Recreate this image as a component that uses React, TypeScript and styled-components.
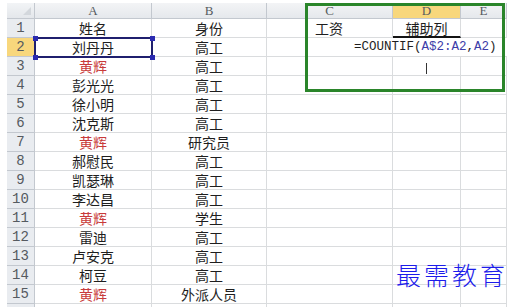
import React from "react";
import styled, { createGlobalStyle } from "styled-components";

const COLORS = {
  GRID: "#dadcde",
  HEAD_BG: "#e9ecf0",
  HEAD_LINE: "#c3c8cf",
  HEAD_TEXT: "#555a60",
  ACTIVE: "#f8d77c",
  TEXT: "#1e1e1e",
  RED: "#c83a3a",
  REF: "#3c3ca8",
  FRAME: "#2a852a",
  SELECT: "#1f1f6e",
  MARK: "#1c1cea",
};

const CJK = `"Noto Sans CJK SC", "Noto Sans", sans-serif`;
const MONO = `"Liberation Mono", "Noto Sans CJK SC", monospace`;

const GlobalStyle = createGlobalStyle`
  body {
    margin: 0;
    background: #ffffff;
    font-family: ${CJK};
  }
`;

const Sheet = styled.div`
  position: relative;
  display: grid;
  grid-template-columns: 28px 117px 115px 126px 68px 46px;
  grid-template-rows: 16px repeat(16, 19px);
  width: 500px;
  height: 304px;
  margin: 3px 0 0 7px;
  overflow: hidden;
`;

const Corner = styled.div`
  position: relative;
  background: linear-gradient(#f2f4f6, #e4e7eb);
  border-right: 1px solid ${COLORS.HEAD_LINE};
  border-bottom: 1px solid ${COLORS.HEAD_LINE};
  &::after {
    content: "";
    position: absolute;
    right: 3px;
    bottom: 3px;
    border-left: 8px solid transparent;
    border-bottom: 8px solid #d3d7dc;
  }
`;

const ColHeader = styled.div<{ $active?: boolean }>`
  display: flex;
  align-items: center;
  justify-content: center;
  background: ${(p) =>
    p.$active ? COLORS.ACTIVE : "linear-gradient(#f3f4f6, #e5e8ec)"};
  border-right: 1px solid ${COLORS.HEAD_LINE};
  border-bottom: 1px solid ${COLORS.HEAD_LINE};
  color: ${COLORS.HEAD_TEXT};
  font-family: "Liberation Serif", serif;
  font-size: 13px;
`;

const RowHeader = styled.div<{ $active?: boolean }>`
  display: flex;
  align-items: center;
  justify-content: center;
  background: ${(p) => (p.$active ? COLORS.ACTIVE : COLORS.HEAD_BG)};
  border-right: 1px solid ${COLORS.HEAD_LINE};
  border-bottom: 1px solid ${COLORS.HEAD_LINE};
  color: ${COLORS.HEAD_TEXT};
  font-family: ${MONO};
  font-size: 14px;
`;

const Cell = styled.div<{
  $align?: "left" | "center";
  $red?: boolean;
  $pad?: number;
  $underline?: boolean;
}>`
  display: flex;
  align-items: center;
  justify-content: ${(p) => (p.$align === "left" ? "flex-start" : "center")};
  padding-left: ${(p) => p.$pad ?? 0}px;
  border-right: 1px solid ${COLORS.GRID};
  border-bottom: ${(p) =>
    p.$underline ? "2px solid #141414" : `1px solid ${COLORS.GRID}`};
  color: ${(p) => (p.$red ? COLORS.RED : COLORS.TEXT)};
  font-size: 14px;
  white-space: nowrap;
`;

const FormulaCell = styled.div`
  grid-column: span 3;
  display: flex;
  align-items: center;
  padding-left: 87px;
  border-bottom: 1px solid ${COLORS.GRID};
  font-family: ${MONO};
  font-size: 12.5px;
  color: ${COLORS.TEXT};
  white-space: nowrap;
`;

const Ref = styled.span`
  color: ${COLORS.REF};
`;

const Caret = styled.span`
  width: 1px;
  height: 11px;
  margin-top: 4px;
  background: #333;
`;

const Selection = styled.div`
  position: absolute;
  left: 27px;
  top: 34px;
  width: 119px;
  height: 21px;
  border: 2px solid ${COLORS.SELECT};
  box-sizing: border-box;
  pointer-events: none;
`;

const Handle = styled.span<{ $x: "l" | "r"; $y: "t" | "b" }>`
  position: absolute;
  width: 5px;
  height: 5px;
  background: #2b2bb0;
  ${(p) => (p.$x === "l" ? "left: -3.5px;" : "right: -3.5px;")}
  ${(p) => (p.$y === "t" ? "top: -3.5px;" : "bottom: -3.5px;")}
`;

const Frame = styled.div`
  position: absolute;
  left: 298px;
  top: 0;
  width: 200px;
  height: 89px;
  border: 3px solid ${COLORS.FRAME};
  box-sizing: border-box;
  pointer-events: none;
`;

const Watermark = styled.div`
  position: absolute;
  left: 389px;
  top: 256px;
  color: ${COLORS.MARK};
  font-size: 25px;
  font-weight: 300;
  letter-spacing: 3px;
  line-height: 30px;
  white-space: nowrap;
`;

type Person = { name: string; role: string; red?: boolean };

const people: Person[] = [
  { name: "姓名", role: "身份" },
  { name: "刘丹丹", role: "高工" },
  { name: "黄辉", role: "高工", red: true },
  { name: "彭光光", role: "高工" },
  { name: "徐小明", role: "高工" },
  { name: "沈克斯", role: "高工" },
  { name: "黄辉", role: "研究员", red: true },
  { name: "郝慰民", role: "高工" },
  { name: "凯瑟琳", role: "高工" },
  { name: "李达昌", role: "高工" },
  { name: "黄辉", role: "学生", red: true },
  { name: "雷迪", role: "高工" },
  { name: "卢安克", role: "高工" },
  { name: "柯豆", role: "高工" },
  { name: "黄辉", role: "外派人员", red: true },
];

const columns = ["A", "B", "C", "D", "E"];

const App: React.FC = () => {
  return (
    <>
      <GlobalStyle />
      <Sheet>
        <Corner />
        {columns.map((c) => (
          <ColHeader key={c} $active={c === "D"}>
            {c}
          </ColHeader>
        ))}

        {people.map((p, i) => {
          const row = i + 1;
          return (
            <React.Fragment key={row}>
              <RowHeader $active={row === 2}>{row}</RowHeader>
              <Cell $red={p.red}>{p.name}</Cell>
              <Cell>{p.role}</Cell>
              {row === 1 ? (
                <>
                  <Cell $align="left" $pad={48}>
                    工资
                  </Cell>
                  <Cell $underline>辅助列</Cell>
                  <Cell />
                </>
              ) : row === 2 ? (
                <FormulaCell>
                  =COUNTIF(<Ref>A$2:A2</Ref>,<Ref>A2</Ref>)
                </FormulaCell>
              ) : row === 3 ? (
                <>
                  <Cell />
                  <Cell>
                    <Caret />
                  </Cell>
                  <Cell />
                </>
              ) : (
                <>
                  <Cell />
                  <Cell />
                  <Cell />
                </>
              )}
            </React.Fragment>
          );
        })}

        {/* partial row 16 at the bottom edge */}
        <RowHeader />
        {columns.map((c) => (
          <Cell key={c} />
        ))}

        <Selection>
          <Handle $x="l" $y="t" />
          <Handle $x="r" $y="t" />
          <Handle $x="l" $y="b" />
          <Handle $x="r" $y="b" />
        </Selection>
        <Frame />
        <Watermark>最需教育</Watermark>
      </Sheet>
    </>
  );
};

export default App;
